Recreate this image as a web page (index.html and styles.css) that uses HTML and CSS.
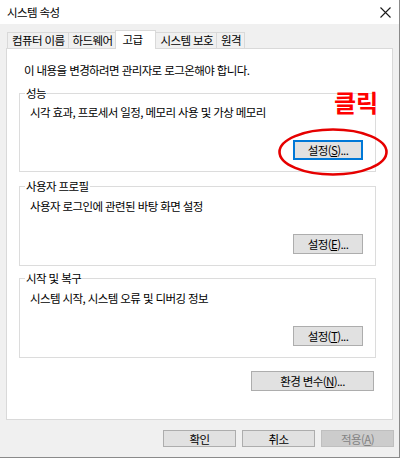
FILE: index.html
```html
<!DOCTYPE html>
<html lang="ko">
<head>
  <meta charset="UTF-8" />
  <title>시스템 속성</title>
  <link rel="stylesheet" href="styles.css">
</head>
<body>
  <div class="window">
    <div class="titlebar">
      <span class="title">시스템 속성</span>
      <svg class="close" width="11" height="11" viewBox="0 0 11 11">
        <path d="M0.5 0.5 L10.5 10.5 M10.5 0.5 L0.5 10.5" stroke="#1a1a1a" stroke-width="1.1" fill="none"/>
      </svg>
    </div>
    <div class="tabs">
      <span class="tab">컴퓨터 이름</span>
      <span class="tab">하드웨어</span>
      <span class="tab active">고급</span>
      <span class="tab">시스템 보호</span>
      <span class="tab">원격</span>
    </div>
    <div class="panel">
      <p class="notice">이 내용을 변경하려면 관리자로 로그온해야 합니다.</p>

      <div class="group">
        <span class="group-title">성능</span>
        <p class="group-text">시각 효과, 프로세서 일정, 메모리 사용 및 가상 메모리</p>
        <div class="group-actions">
          <button class="btn focused">설정(<u>S</u>)...</button>
        </div>
      </div>

      <div class="group second">
        <span class="group-title">사용자 프로필</span>
        <p class="group-text">사용자 로그인에 관련된 바탕 화면 설정</p>
        <div class="group-actions">
          <button class="btn">설정(<u>E</u>)...</button>
        </div>
      </div>

      <div class="group third">
        <span class="group-title">시작 및 복구</span>
        <p class="group-text">시스템 시작, 시스템 오류 및 디버깅 정보</p>
        <div class="group-actions">
          <button class="btn">설정(<u>T</u>)...</button>
        </div>
      </div>

      <div class="env-row">
        <button class="btn env">환경 변수(<u>N</u>)...</button>
      </div>
    </div>
    <div class="footer">
      <button class="btn dlg">확인</button>
      <button class="btn dlg">취소</button>
      <button class="btn dlg" disabled>적용(<u>A</u>)</button>
    </div>

    <!-- annotation drawn over the dialog -->
    <span class="note">클릭</span>
    <svg class="ring" width="112" height="50" viewBox="0 0 112 50">
      <ellipse cx="56" cy="25" rx="53.5" ry="22.5" stroke="#e60000" stroke-width="2.6" fill="none"/>
    </svg>
  </div>
</body>
</html>
```

FILE: styles.css
```css
body {
  margin: 0;
  background: #fff;
  font-family: "Noto Sans CJK KR", "Noto Sans", sans-serif;
  font-size: 11.5px;
  letter-spacing: -0.6px;
  color: #000;
}
.window {
  position: relative;
  width: 400px;
  height: 458px;
  box-sizing: border-box;
  background: #f0f0f0;
  border-right: 1px solid #8a8a8a;
  border-bottom: 1px solid #8a8a8a;
}
.titlebar {
  height: 24px;
  background: #fff;
  display: flex;
  align-items: center;
  justify-content: space-between;
  padding: 0 8px 0 7px;
}
.title {
  line-height: 16px;
}
.tabs {
  height: 24px;
  display: flex;
  align-items: flex-end;
  padding-left: 7px;
}
.tab {
  height: 16px;
  box-sizing: border-box;
  line-height: 15px;
  padding: 0 3px 0 4px;
  border: 1px solid #d9d9d9;
  border-bottom: none;
  margin-right: -1px;
  background: #f0f0f0;
}
.tab.active {
  position: relative;
  z-index: 1;
  height: 19px;
  margin-bottom: -1px;
  line-height: 16px;
  padding: 0 13px 0 6px;
  background: #fff;
}
.panel {
  margin-left: 6px;
  width: 387px;
  height: 372px;
  box-sizing: border-box;
  border: 1px solid #d9d9d9;
  background: #fff;
  padding: 0 16px 0 12px;
  display: flex;
  flex-direction: column;
}
.notice {
  margin: 13px 0 0 5px;
  line-height: 16px;
}
.group {
  margin-top: 15px;
  height: 79px;
  box-sizing: border-box;
  border: 1px solid #dcdcdc;
  padding: 0 12px 11px 10px;
  display: flex;
  flex-direction: column;
}
.group.second {
  margin-top: 14px;
  height: 80px;
}
.group.third {
  margin-top: 12px;
  height: 80px;
}
.group-title {
  align-self: flex-start;
  margin: -8px 0 0 -5px;
  padding: 0 1px;
  line-height: 14px;
  background: #fff;
}
.group-text {
  margin: 4px 0 0;
  line-height: 16px;
}
.second .group-text,
.third .group-text {
  margin-top: 5px;
}
.group-actions {
  margin-top: auto;
  display: flex;
  justify-content: flex-end;
}
.btn {
  font-family: inherit;
  font-size: 11.5px;
  letter-spacing: -0.6px;
  color: #000;
  width: 70px;
  height: 20px;
  padding: 0;
  box-sizing: border-box;
  background: #e1e1e1;
  border: 1px solid #adadad;
  line-height: 16px;
}
.btn.focused {
  border-color: #0078d7;
  box-shadow: inset 0 0 0 1px #0078d7;
}
.env-row {
  margin-top: 13px;
  display: flex;
  justify-content: flex-end;
  padding-right: 2px;
}
.btn.env {
  width: 123px;
}
.footer {
  margin-top: 10px;
  display: flex;
  justify-content: flex-end;
  gap: 6px;
  padding-right: 5px;
}
.btn.dlg {
  width: 73px;
  height: 17px;
  line-height: 14px;
}
.btn:disabled {
  background: #cccccc;
  border-color: #bfbfbf;
  color: #838383;
}
.note {
  position: absolute;
  left: 334px;
  top: 87px;
  font-size: 24px;
  font-weight: bold;
  letter-spacing: 0;
  line-height: 30px;
  color: #ff0000;
}
.ring {
  position: absolute;
  left: 277px;
  top: 127px;
}
```
